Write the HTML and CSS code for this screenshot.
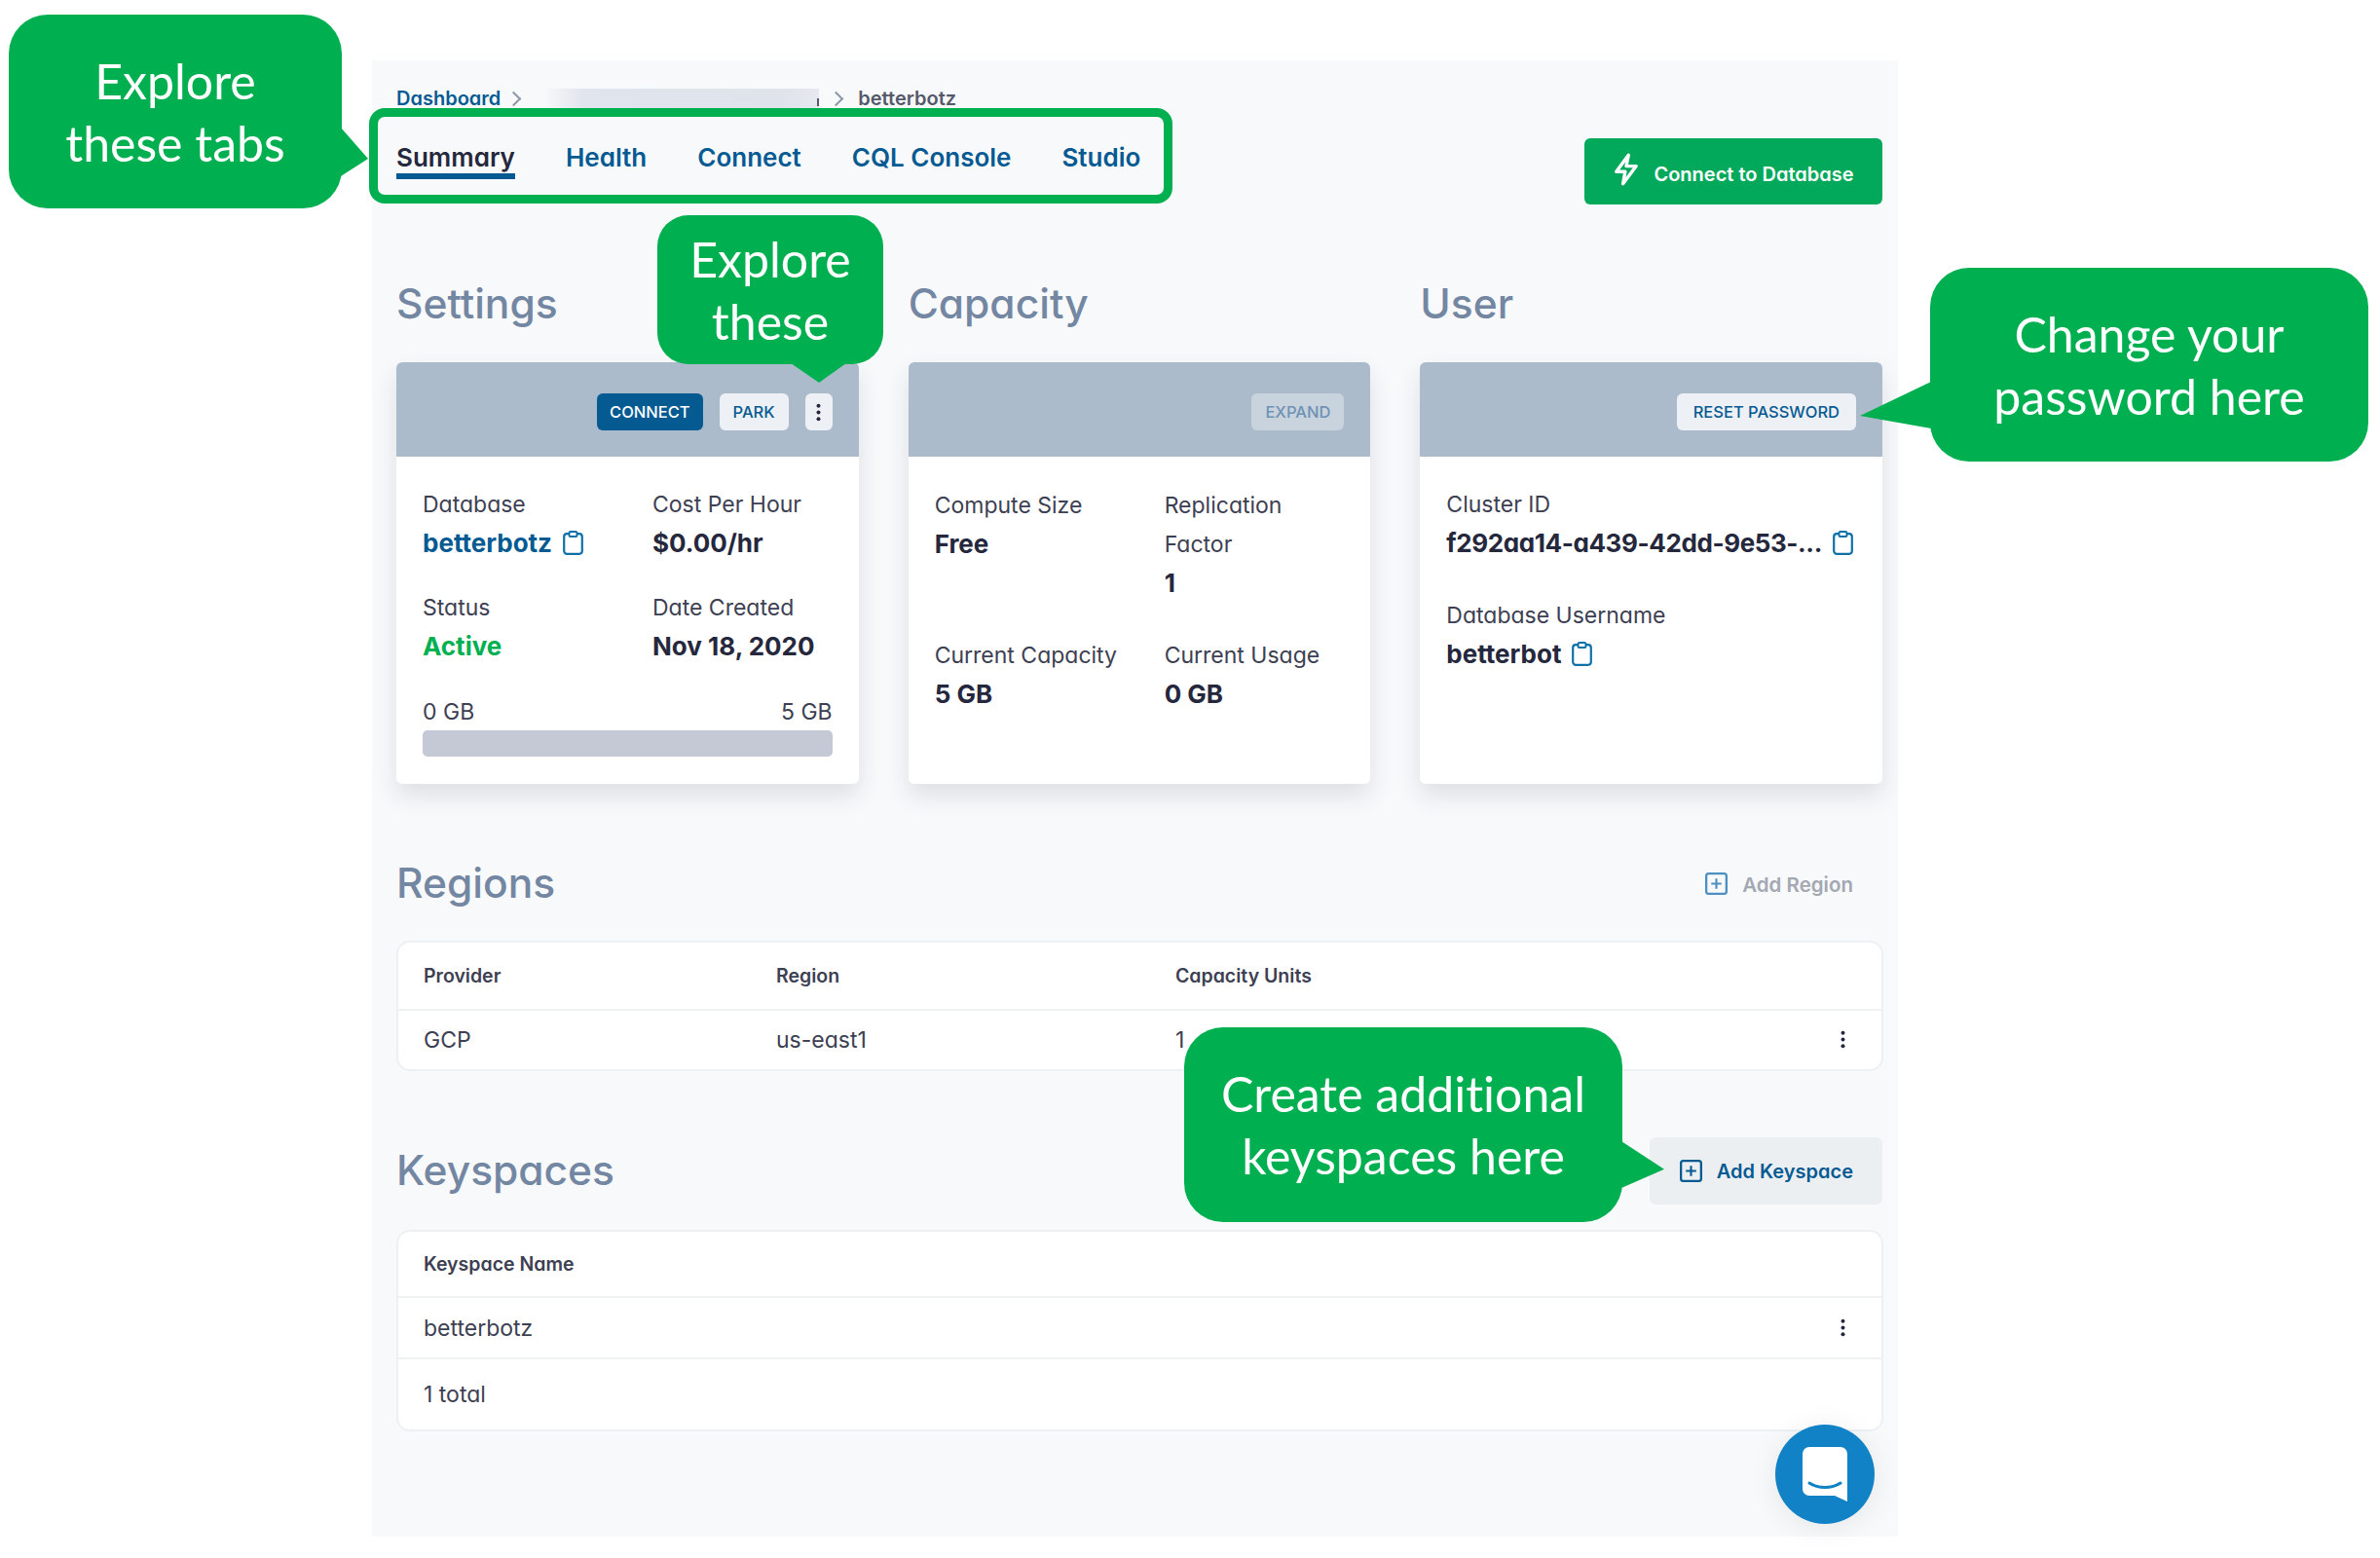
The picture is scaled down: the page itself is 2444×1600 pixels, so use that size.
FILE: index.html
```html
<!DOCTYPE html>
<html lang="en">
<head>
  <meta charset="UTF-8">
  <title>betterbotz - Summary</title>
  <link rel="stylesheet" href="styles.css">
</head>
<body>

  <svg class="defs" width="0" height="0">
    <symbol id="clip" viewBox="0 0 21 25">
      <rect x="1.2" y="3.2" width="18.6" height="20.6" rx="3" fill="none" stroke="currentColor" stroke-width="2.2"/>
      <rect x="6.5" y="1" width="8" height="5" rx="1.5" fill="#fff" stroke="currentColor" stroke-width="2"/>
    </symbol>
    <symbol id="plus" viewBox="0 0 24 24">
      <rect x="1.2" y="1.2" width="21.6" height="21.6" rx="2.5" fill="none" stroke="currentColor" stroke-width="2.4"/>
      <path d="M12 6.5v11M6.5 12h11" fill="none" stroke="currentColor" stroke-width="2.2"/>
    </symbol>
    <symbol id="dots" viewBox="0 0 6 22">
      <circle cx="3" cy="3" r="2.4" fill="currentColor"/>
      <circle cx="3" cy="11" r="2.4" fill="currentColor"/>
      <circle cx="3" cy="19" r="2.4" fill="currentColor"/>
    </symbol>
  </svg>

  <main class="panel">
    <nav class="crumbs">
      <a href="#">Dashboard</a>
      <span class="chev chev-first"></span>
      <span class="blurred"></span>
      <span class="chev"></span>
      <span class="here">betterbotz</span>
    </nav>

    <div class="topbar">
      <div class="tabs">
        <a class="tab active" href="#">Summary</a>
        <a class="tab" href="#">Health</a>
        <a class="tab" href="#">Connect</a>
        <a class="tab" href="#">CQL Console</a>
        <a class="tab" href="#">Studio</a>
      </div>
      <button class="btn-connect">
        <svg class="zap" viewBox="0 0 24 30"><path d="M14 2 3 17h8l-2 11 12-16h-9l2-10z" fill="none" stroke="#fff" stroke-width="3" stroke-linejoin="round"/></svg>
        <span>Connect to Database</span>
      </button>
    </div>

    <div class="cards">
      <section>
        <h2>Settings</h2>
        <div class="card">
          <div class="card-head">
            <button class="chip primary">CONNECT</button>
            <button class="chip">PARK</button>
            <button class="chip kebab"><svg class="dots-sm"><use href="#dots"/></svg></button>
          </div>
          <div class="card-body">
            <div class="facts">
              <div class="fact">
                <span class="label">Database</span>
                <span class="value link">betterbotz <svg class="copy"><use href="#clip"/></svg></span>
              </div>
              <div class="fact">
                <span class="label">Cost Per Hour</span>
                <span class="value">$0.00/hr</span>
              </div>
              <div class="fact">
                <span class="label">Status</span>
                <span class="value active-text">Active</span>
              </div>
              <div class="fact">
                <span class="label">Date Created</span>
                <span class="value">Nov 18, 2020</span>
              </div>
            </div>
            <div class="usage">
              <span>0 GB</span>
              <span>5 GB</span>
            </div>
            <div class="bar"></div>
          </div>
        </div>
      </section>

      <section>
        <h2>Capacity</h2>
        <div class="card">
          <div class="card-head">
            <button class="chip disabled">EXPAND</button>
          </div>
          <div class="card-body">
            <div class="facts facts-capacity">
              <div class="fact">
                <span class="label">Compute Size</span>
                <span class="value">Free</span>
              </div>
              <div class="fact">
                <span class="label">Replication Factor</span>
                <span class="value">1</span>
              </div>
              <div class="fact">
                <span class="label nowrap">Current Capacity</span>
                <span class="value">5 GB</span>
              </div>
              <div class="fact">
                <span class="label">Current Usage</span>
                <span class="value">0 GB</span>
              </div>
            </div>
          </div>
        </div>
      </section>

      <section>
        <h2>User</h2>
        <div class="card">
          <div class="card-head">
            <button class="chip wide">RESET PASSWORD</button>
          </div>
          <div class="card-body">
            <div class="stack">
              <div class="fact">
                <span class="label">Cluster ID</span>
                <span class="value"><span class="tight">f292aa14-a439-42dd-9e53-...</span> <svg class="copy"><use href="#clip"/></svg></span>
              </div>
              <div class="fact">
                <span class="label">Database Username</span>
                <span class="value">betterbot <svg class="copy"><use href="#clip"/></svg></span>
              </div>
            </div>
          </div>
        </div>
      </section>
    </div>

    <div class="section-head regions-head">
      <h2>Regions</h2>
      <a class="add muted" href="#"><svg class="plus"><use href="#plus"/></svg>Add Region</a>
    </div>
    <div class="table">
      <div class="tr th cols-3 h70">
        <span>Provider</span><span>Region</span><span>Capacity Units</span>
      </div>
      <div class="tr cols-3 h60">
        <span>GCP</span><span>us-east1</span><span>1</span>
        <svg class="dots-row"><use href="#dots"/></svg>
      </div>
    </div>

    <div class="section-head keyspaces-head">
      <h2>Keyspaces</h2>
      <a class="add filled" href="#"><svg class="plus"><use href="#plus"/></svg>Add Keyspace</a>
    </div>
    <div class="table">
      <div class="tr th h68"><span>Keyspace Name</span></div>
      <div class="tr h63">
        <span>betterbotz</span>
        <svg class="dots-row"><use href="#dots"/></svg>
      </div>
      <div class="tr h72"><span>1 total</span></div>
    </div>

    <button class="chat">
      <svg viewBox="0 0 46 56" width="46" height="56">
        <path d="M7 0h32a7 7 0 0 1 7 7v49l-13-6H7a7 7 0 0 1-7-7V7a7 7 0 0 1 7-7z" fill="#fff"/>
        <path d="M7 37c9 6 23 6 32 0" fill="none" stroke="#1182c5" stroke-width="3" stroke-linecap="round"/>
      </svg>
    </button>
  </main>

  <div class="tabs-frame"></div>
  <div class="callout c-tabs">Explore<br>these tabs</div>
  <div class="callout c-these">Explore<br>these</div>
  <div class="callout c-pass">Change your<br>password here</div>
  <div class="callout c-keys">Create additional<br>keyspaces here</div>

</body>
</html>
```

FILE: styles.css
```css
* {
  box-sizing: border-box;
}

body {
  margin: 0;
  height: 1600px;
  background: white;
  font-family: Inter, "Noto Sans", sans-serif;
  font-feature-settings: "cv11";
  color: #25283d;
  overflow: hidden;
}

.defs {
  position: absolute;
}

a {
  text-decoration: none;
}

button {
  font-family: inherit;
  font-feature-settings: inherit;
  border: none;
}

.panel {
  position: relative;
  margin: 62px 0 0 382px;
  width: 1567px;
  height: 1516px;
  padding: 0 16px 0 25px;
  background: #f8f9fb;
}

/* breadcrumb */
.crumbs {
  display: flex;
  align-items: center;
  height: 24px;
  padding-top: 27px;
  box-sizing: content-box;
  font-size: 20px;
  font-weight: 600;
}

.crumbs a {
  color: #055a92;
}

.chev {
  width: 11px;
  height: 11px;
  margin: 0 17px 0 12px;
  border-top: 2px solid #8d99a8;
  border-right: 2px solid #8d99a8;
  transform: rotate(45deg);
}

.chev-first {
  margin: 0 25px 0 8px;
}

.blurred {
  position: relative;
  width: 283px;
  height: 20px;
  background: linear-gradient(90deg, #f8f9fb, #e0e4ec 15%, #dfe3ea 85%, #e6e9ef);
}

.blurred::after {
  content: "";
  position: absolute;
  right: 0;
  bottom: 2px;
  width: 2px;
  height: 8px;
  background: #55596a;
}

.here {
  color: #55596a;
}

/* tabs */
.topbar {
  display: flex;
  justify-content: space-between;
  align-items: flex-start;
  margin-top: 29px;
}

.tabs {
  display: flex;
  gap: 52px;
}

.tab {
  height: 42px;
  padding-top: 2px;
  line-height: 36px;
  font-size: 26px;
  font-weight: 600;
  color: #055a92;
}

.tab.active {
  color: #25283d;
  border-bottom: 6px solid #055a92;
}

.btn-connect {
  display: flex;
  align-items: center;
  justify-content: center;
  gap: 14px;
  width: 306px;
  height: 68px;
  border-radius: 6px;
  background: #02a95a;
  color: white;
  font-size: 20px;
  font-weight: 600;
}

.btn-connect span {
  margin-top: 5px;
}

.zap {
  width: 28px;
  height: 34px;
  margin-top: -4px;
}

/* cards */
.cards {
  display: grid;
  grid-template-columns: repeat(3, 1fr);
  gap: 51px;
  margin-top: 74px;
}

h2 {
  margin: 0;
  height: 56px;
  line-height: 56px;
  font-size: 42.5px;
  font-weight: 500;
  color: #7487a2;
}

.card {
  height: 433px;
  margin-top: 32px;
  border-radius: 6px;
  background: white;
  box-shadow: 0 12px 24px rgba(30, 40, 60, 0.12);
  overflow: hidden;
}

.card-head {
  display: flex;
  justify-content: flex-end;
  align-items: center;
  gap: 17px;
  height: 97px;
  padding: 5px 27px 0;
  background: #acbbcc;
}

.chip {
  height: 38px;
  padding: 0 14px;
  border-radius: 6px;
  background: #edf0f4;
  color: #055a92;
  font-size: 16.5px;
  font-weight: 500;
}

.chip.wide {
  padding: 0 17px;
}

.chip.primary {
  padding: 0 13px;
  background: #055a92;
  color: white;
}

.chip.disabled {
  background: #c8d3de;
  color: #6f92b4;
}

.chip.kebab {
  display: flex;
  align-items: center;
  justify-content: center;
  width: 28px;
  padding: 0;
}

.dots-sm {
  width: 5px;
  height: 21px;
  color: #25283d;
}

.card-body {
  padding: 30px 27px 0;
}

.facts {
  display: grid;
  grid-template-columns: 184px 184px;
  column-gap: 52px;
  row-gap: 28px;
}

.facts-capacity {
  row-gap: 35px;
}

.fact {
  display: flex;
  flex-direction: column;
}

.label {
  line-height: 39px;
  font-size: 23px;
  color: #3d4052;
}

.facts-capacity .label {
  line-height: 40px;
}

.nowrap {
  white-space: nowrap;
}

.value {
  display: flex;
  align-items: center;
  gap: 11px;
  line-height: 39px;
  font-size: 26px;
  font-weight: 700;
  white-space: nowrap;
}

.tight {
  letter-spacing: -0.4px;
}

.value.link {
  color: #055a92;
}

.active-text {
  color: #00b050;
}

.copy {
  flex: none;
  width: 21px;
  height: 25px;
  color: #0e70a8;
}

.stack {
  display: flex;
  flex-direction: column;
  gap: 36px;
}

.usage {
  display: flex;
  justify-content: space-between;
  margin-top: 32px;
  line-height: 32px;
  font-size: 23px;
  color: #3d4052;
}

.bar {
  height: 27px;
  margin-top: 3px;
  border-radius: 5px;
  background: #c4c9d5;
}

/* regions and keyspaces */
.section-head {
  display: flex;
  justify-content: space-between;
  align-items: center;
}

.regions-head {
  margin-top: 74px;
  margin-bottom: 31px;
}

.keyspaces-head {
  height: 69px;
  margin-top: 68px;
  margin-bottom: 26px;
}

.keyspaces-head h2 {
  margin-top: -2px;
}

.add {
  display: flex;
  align-items: center;
  gap: 15px;
  padding: 0 30px 0 31px;
  font-size: 20px;
  font-weight: 600;
}

.plus {
  width: 23px;
  height: 23px;
}

.add.muted {
  padding-top: 2px;
  font-size: 20.5px;
  color: #a3a8b2;
}

.add.muted .plus {
  margin-top: -2px;
  color: #4c8fc0;
}

.add.filled {
  height: 69px;
  border-radius: 6px;
  background: #eceff2;
  color: #055a92;
}

.table {
  margin-right: -1px;
  border: 2px solid #eef1f4;
  border-radius: 14px;
  background: white;
}

.tr {
  position: relative;
  display: grid;
  align-items: center;
  padding-left: 26px;
  font-size: 23px;
  color: #3d4052;
  border-bottom: 2px solid #eef1f4;
}

.tr:last-child {
  border-bottom: none;
}

.th {
  font-size: 19.5px;
  font-weight: 600;
}

.cols-3 {
  grid-template-columns: 362px 410px 1fr;
}

.h70 { height: 70px; }
.h60 { height: 60px; }
.h68 { height: 68px; }
.h63 { height: 63px; }
.h72 { height: 72px; }

.dots-row {
  position: absolute;
  right: 37px;
  top: 50%;
  width: 5px;
  height: 21px;
  margin-top: -11px;
  color: #25283d;
}

.chat {
  position: absolute;
  left: 1441px;
  top: 1401px;
  display: flex;
  align-items: center;
  justify-content: center;
  width: 102px;
  height: 102px;
  padding: 0;
  border-radius: 50%;
  background: #1182c5;
  box-shadow: 0 4px 30px rgba(0, 0, 0, 0.08);
}

/* green annotations on top of the page */
.tabs-frame {
  position: absolute;
  left: 379px;
  top: 111px;
  width: 825px;
  height: 98px;
  border: 9px solid #00b050;
  border-radius: 16px;
}

.callout {
  position: absolute;
  display: flex;
  align-items: center;
  justify-content: center;
  text-align: center;
  border-radius: 40px;
  background: #00b050;
  color: white;
  font-family: Lato, sans-serif;
  font-feature-settings: normal;
  font-variant-ligatures: none;
  font-size: 50px;
  line-height: 64px;
}

.callout::after {
  content: "";
  position: absolute;
  background: #00b050;
}

.c-tabs {
  left: 9px;
  top: 15px;
  width: 342px;
  height: 199px;
}

.c-tabs::after {
  left: 100%;
  top: 116px;
  width: 28px;
  height: 50px;
  margin-left: -1px;
  clip-path: polygon(0 0, 100% 64%, 0 100%);
}

.c-these {
  left: 675px;
  top: 221px;
  width: 232px;
  height: 153px;
  border-radius: 32px;
}

.c-these::after {
  left: 137px;
  top: 100%;
  width: 57px;
  height: 20px;
  margin-top: -1px;
  clip-path: polygon(0 0, 100% 0, 51% 100%);
}

.c-pass {
  left: 1982px;
  top: 275px;
  width: 450px;
  height: 199px;
}

.c-pass::after {
  right: 100%;
  top: 117px;
  width: 73px;
  height: 48px;
  margin-right: -1px;
  clip-path: polygon(100% 0, 0 73%, 100% 100%);
}

.c-keys {
  left: 1216px;
  top: 1055px;
  width: 450px;
  height: 200px;
}

.c-keys::after {
  left: 100%;
  top: 117px;
  width: 44px;
  height: 48px;
  margin-left: -1px;
  clip-path: polygon(0 0, 100% 60%, 0 100%);
}
```
